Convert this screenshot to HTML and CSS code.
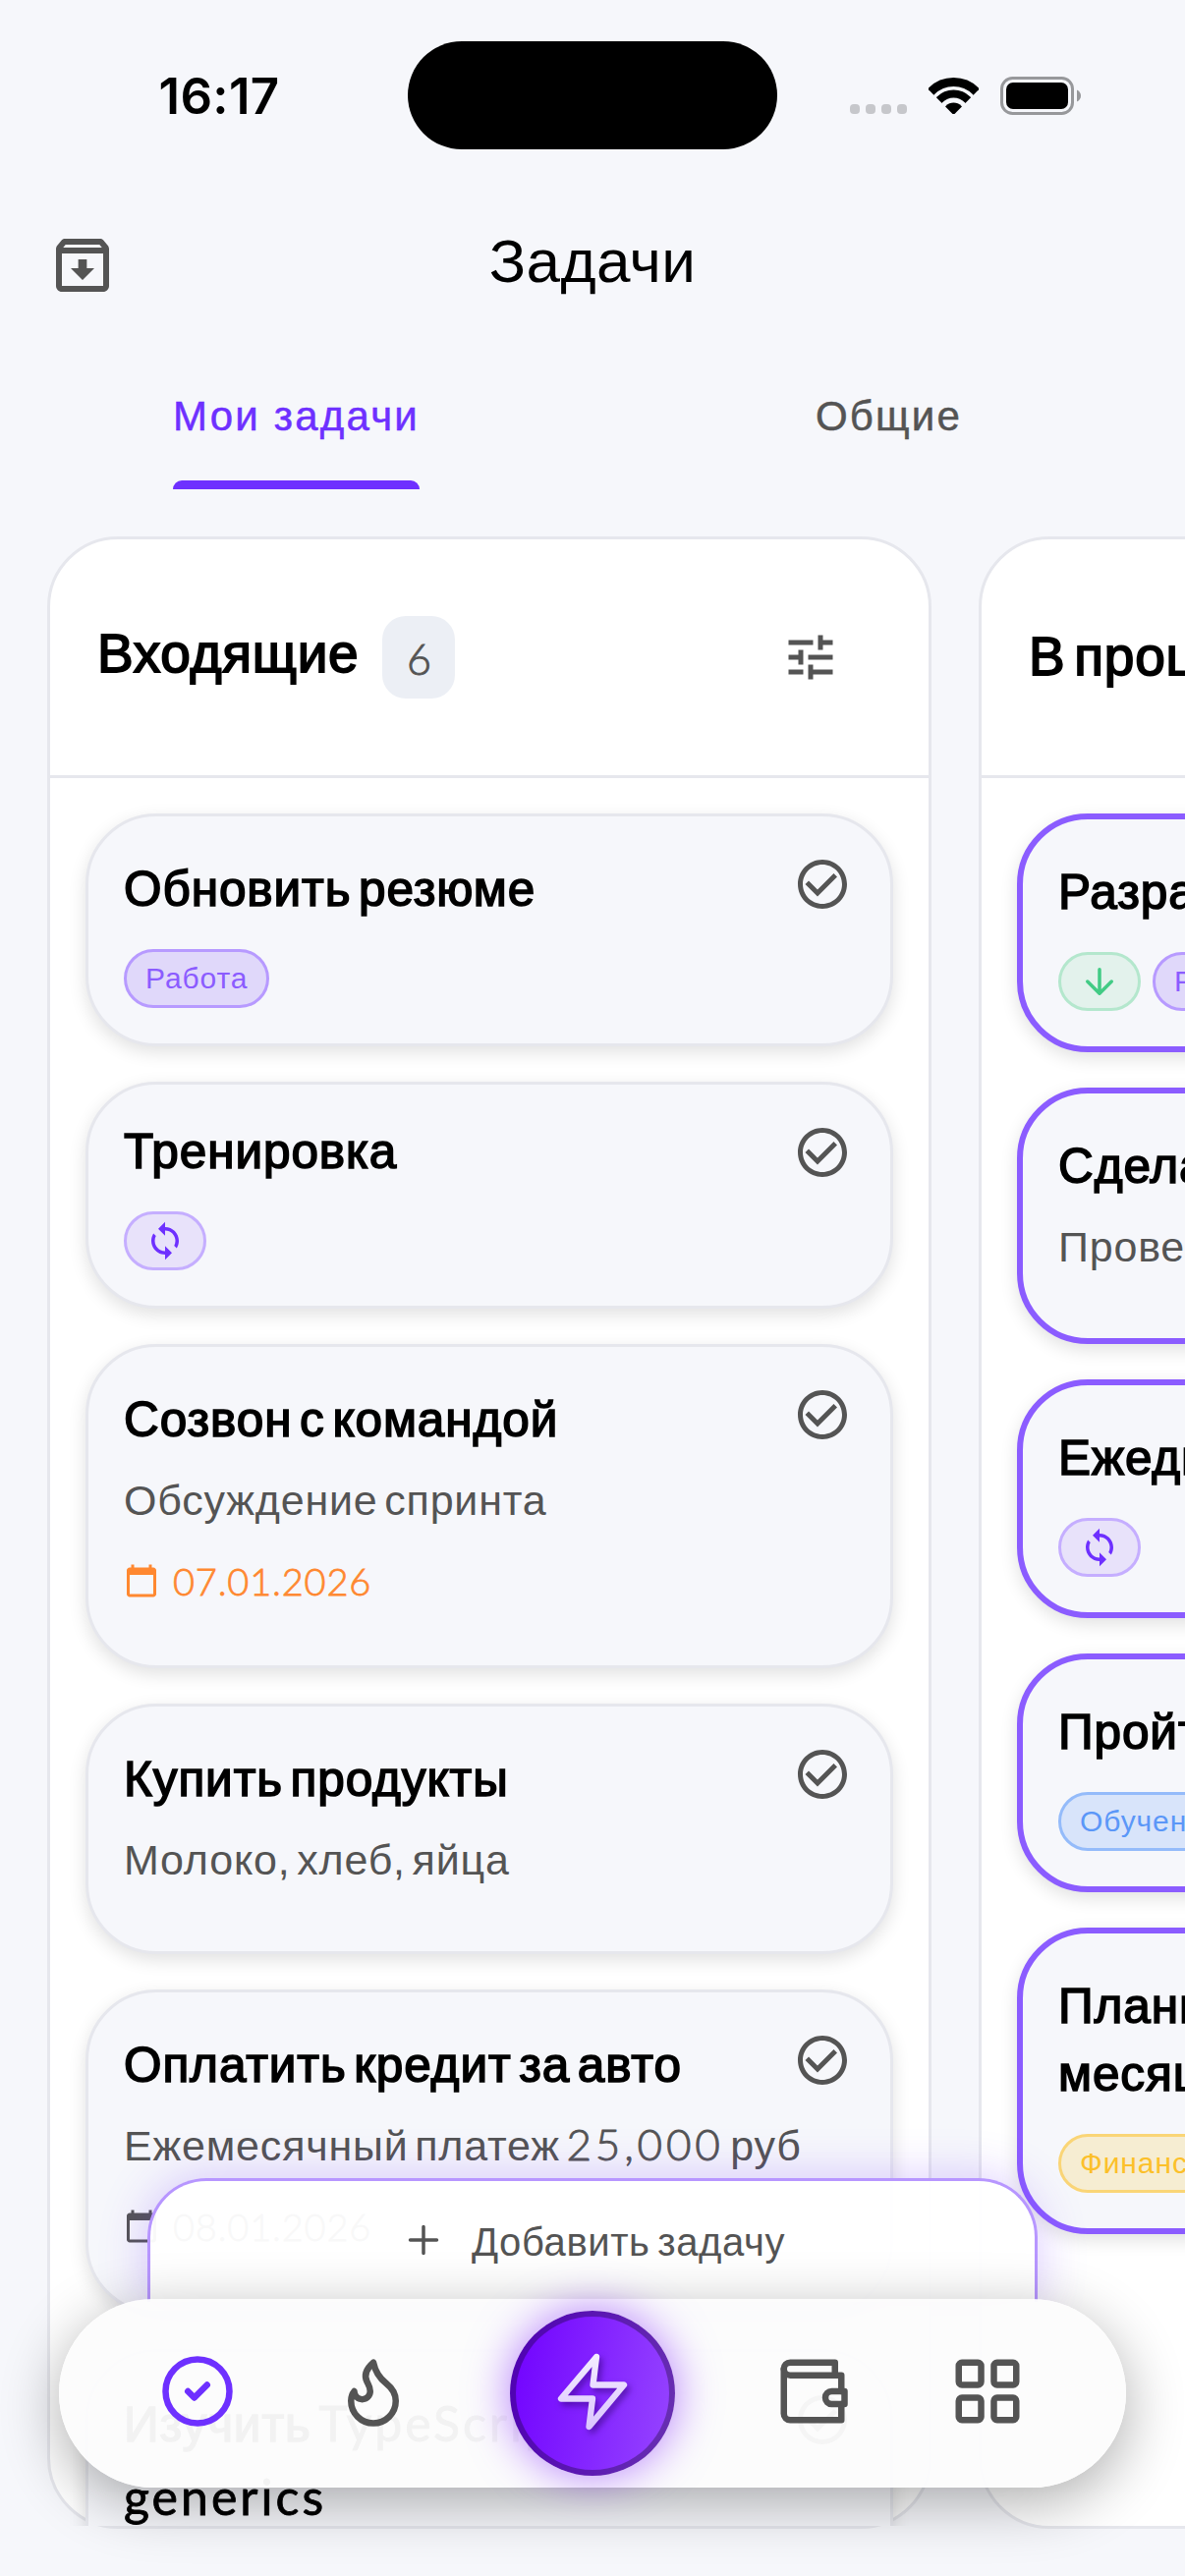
FILE: index.html
```html
<!DOCTYPE html>
<html lang="ru">
<head>
    <meta charset="UTF-8" />
    <meta name="viewport" content="width=device-width, initial-scale=1" />
    <title>Задачи</title>
    <link rel="stylesheet" href="styles.css">
</head>
<body>
    <!-- shared icons -->
    <svg class="sprite" aria-hidden="true">
        <symbol id="i-check" viewBox="0 0 24 24"><path fill="currentColor" d="M16.59 7.58 10 14.17l-3.59-3.58L5 12l5 5 8-8zM12 2C6.48 2 2 6.48 2 12s4.48 10 10 10 10-4.48 10-10S17.52 2 12 2zm0 18c-4.42 0-8-3.58-8-8s3.58-8 8-8 8 3.58 8 8-3.58 8-8 8z"/></symbol>
        <symbol id="i-sync" viewBox="0 0 24 24"><path fill="currentColor" d="M12 4V1L8 5l4 4V6c3.31 0 6 2.69 6 6 0 1.01-.25 1.97-.7 2.8l1.46 1.46C19.54 15.03 20 13.57 20 12c0-4.42-3.58-8-8-8zm0 14c-3.31 0-6-2.69-6-6 0-1.01.25-1.97.7-2.8L5.24 7.74C4.46 8.97 4 10.43 4 12c0 4.42 3.58 8 8 8v3l4-4-4-4v3z"/></symbol>
        <symbol id="i-calendar" viewBox="0 0 24 24"><path fill="currentColor" d="M20 3h-1V1h-2v2H7V1H5v2H4c-1.1 0-2 .9-2 2v16c0 1.1.9 2 2 2h16c1.1 0 2-.9 2-2V5c0-1.1-.9-2-2-2zm0 18H4V8h16v13z"/></symbol>
    </svg>

    <div class="phone">
        <div class="status">
            <div class="status-time">16:17</div>
            <div class="island"></div>
            <div class="status-icons">
                <div class="dots"><i></i><i></i><i></i><i></i></div>
                <svg class="wifi" viewBox="0 0 51 37">
                    <clipPath id="wedge"><path d="M25.5 38 -12 0V-9H63V0z"/></clipPath>
                    <g clip-path="url(#wedge)">
                        <circle cx="25.5" cy="36.5" r="32" fill="none" stroke="#000" stroke-width="9"/>
                        <circle cx="25.5" cy="36.5" r="20" fill="none" stroke="#000" stroke-width="8"/>
                        <circle cx="25.5" cy="36.5" r="11"/>
                    </g>
                </svg>
                <svg class="battery" viewBox="0 0 82 39">
                    <rect x="1.5" y="1.5" width="72" height="36" rx="11" fill="none" stroke="#97989b" stroke-width="3"/>
                    <rect x="6" y="6" width="63" height="27" rx="7"/>
                    <path fill="#97989b" d="M78 13.5c2.5 1 4 3.400 4 6s-1.500 5-4 6z"/>
                </svg>
            </div>
        </div>

        <header class="header">
            <svg class="archive" viewBox="0 0 24 24"><path fill="currentColor" d="m20.540 5.230-1.390-1.680C18.880 3.210 18.470 3 18 3H6c-.47 0-.88.21-1.160.55L3.460 5.230C3.170 5.570 3 6.020 3 6.500V19c0 1.100.9 2 2 2h14c1.100 0 2-.9 2-2V6.500c0-.48-.17-.93-.46-1.270zM6.240 5h11.520l.83 1H5.420l.82-1zM5 19V8h14v11H5zm8.450-9h-2.900v3H8l4 4 4-4h-2.550z"/></svg>
            <h1>Задачи</h1>
        </header>

        <nav class="tabs">
            <a class="tab active">Мои задачи</a>
            <a class="tab">Общие</a>
        </nav>

        <main class="board">
            <section class="column">
                <div class="column-head">
                    <h2>Входящие</h2>
                    <span class="count">6</span>
                    <svg class="tune" viewBox="0 0 24 24"><path fill="currentColor" d="M3 17v2h6v-2H3zM3 5v2h10V5H3zm10 16v-2h8v-2h-8v-2h-2v6h2zM7 9v2H3v2h4v2h2V9H7zm14 4v-2H11v2h10zm-6-4h2V7h4V5h-4V3h-2v6z"/></svg>
                </div>
                <div class="list">
                    <article class="card">
                        <div class="card-body">
                            <h3>Обновить резюме</h3>
                            <div class="chips"><span class="chip work">Работа</span></div>
                        </div>
                        <svg class="done"><use href="#i-check"/></svg>
                    </article>

                    <article class="card">
                        <div class="card-body">
                            <h3 class="tight">Тренировка</h3>
                            <div class="chips"><span class="chip repeat"><svg><use href="#i-sync"/></svg></span></div>
                        </div>
                        <svg class="done"><use href="#i-check"/></svg>
                    </article>

                    <article class="card">
                        <div class="card-body">
                            <h3>Созвон с командой</h3>
                            <p class="desc">Обсуждение спринта</p>
                            <div class="date today"><svg><use href="#i-calendar"/></svg>07.01.2026</div>
                        </div>
                        <svg class="done"><use href="#i-check"/></svg>
                    </article>

                    <article class="card">
                        <div class="card-body">
                            <h3>Купить продукты</h3>
                            <p class="desc">Молоко, хлеб, яйца</p>
                        </div>
                        <svg class="done"><use href="#i-check"/></svg>
                    </article>

                    <article class="card">
                        <div class="card-body">
                            <h3>Оплатить кредит за авто</h3>
                            <p class="desc">Ежемесячный платеж <span class="num">25,000</span> руб</p>
                            <div class="date"><svg><use href="#i-calendar"/></svg>08.01.2026</div>
                        </div>
                        <svg class="done"><use href="#i-check"/></svg>
                    </article>

                    <article class="card">
                        <div class="card-body">
                            <h3 class="loose">Изучить <span class="lat">TypeScript<br>generics</span></h3>
                        </div>
                        <svg class="done"><use href="#i-check"/></svg>
                    </article>
                </div>
            </section>

            <section class="column progress">
                <div class="column-head">
                    <h2>В процессе</h2>
                </div>
                <div class="list">
                    <article class="card">
                        <div class="card-body">
                            <h3>Разработать</h3>
                            <div class="chips">
                                <span class="chip low"><svg viewBox="0 0 24 24"><path fill="none" stroke="currentColor" stroke-width="2" stroke-linecap="round" stroke-linejoin="round" d="M12 5v14M5 12l7 7 7-7"/></svg></span>
                                <span class="chip work">Работа</span>
                            </div>
                        </div>
                    </article>

                    <article class="card">
                        <div class="card-body">
                            <h3>Сделать</h3>
                            <p class="desc">Проверить</p>
                        </div>
                    </article>

                    <article class="card">
                        <div class="card-body">
                            <h3>Ежедневно</h3>
                            <div class="chips"><span class="chip repeat"><svg><use href="#i-sync"/></svg></span></div>
                        </div>
                    </article>

                    <article class="card">
                        <div class="card-body">
                            <h3>Пройти курс</h3>
                            <div class="chips"><span class="chip study">Обучение</span></div>
                        </div>
                    </article>

                    <article class="card">
                        <div class="card-body">
                            <h3>Планирование<br>месяца</h3>
                            <div class="chips"><span class="chip money">Финансы</span></div>
                        </div>
                    </article>
                </div>
            </section>
        </main>

        <button class="add-task" type="button">
            <svg viewBox="0 0 32 32"><path fill="none" stroke="currentColor" stroke-width="3.500" stroke-linecap="round" d="M16 2.500v27M2.500 16h27"/></svg>
            Добавить задачу
        </button>

        <nav class="dock">
            <svg class="dock-icon active" viewBox="0 0 24 24"><circle cx="12" cy="12" r="10"/><path d="m9 12 2 2 4-4"/></svg>
            <svg class="dock-icon" viewBox="0 0 24 24"><path d="M8.500 14.500A2.500 2.500 0 0 0 11 12c0-1.380-.5-2-1-3-1.072-2.143-.224-4.054 2-6 .5 2.500 2 4.900 4 6.500 2 1.600 3 3.500 3 5.500a7 7 0 1 1-14 0c0-1.153.433-2.294 1-3a2.500 2.500 0 0 0 2.500 2.500z"/></svg>
            <div class="bolt">
                <svg viewBox="0 0 84 84">
                    <linearGradient id="boltFill" x1="0" y1="0" x2="0" y2="1">
                        <stop offset="0" stop-color="#f3ecff"/>
                        <stop offset="1" stop-color="#dcc6ff"/>
                    </linearGradient>
                    <path fill="none" stroke="url(#boltFill)" stroke-width="6.300" stroke-linecap="round" stroke-linejoin="round" d="M46 5 10 47.500h32L38.500 76 74 33.500H42.500z"/>
                </svg>
            </div>
            <svg class="dock-icon" viewBox="0 0 24 24"><path d="M21 12V7H5a2 2 0 0 1 0-4h14v4"/><path d="M3 5v14a2 2 0 0 0 2 2h16v-5"/><path d="M18 12a2 2 0 0 0 0 4h4v-4Z"/></svg>
            <svg class="dock-icon" viewBox="0 0 24 24"><rect x="3" y="3" width="7" height="7" rx="1"/><rect x="14" y="3" width="7" height="7" rx="1"/><rect x="14" y="14" width="7" height="7" rx="1"/><rect x="3" y="14" width="7" height="7" rx="1"/></svg>
        </nav>
    </div>
</body>
</html>
```
FILE: styles.css
```css
* {
    box-sizing: border-box;
}

body {
    margin: 0;
    background: #f6f7fb;
    font-family: "Liberation Sans", Arial, sans-serif;
    color: #000;
}

h1, h2, h3, p {
    margin: 0;
    font-weight: normal;
}

svg {
    display: block;
    flex: none;
}

.sprite {
    position: absolute;
    width: 0;
    height: 0;
}

.phone {
    position: relative;
    width: 1206px;
    height: 2622px;
    overflow: hidden;
}

/* status bar */
.status {
    height: 194px;
    display: grid;
    grid-template-columns: 415px 376px 415px;
    align-items: center;
}

.status-time {
    padding-left: 31px;
    text-align: center;
    font: 600 51px Inter, sans-serif;
    letter-spacing: 0.3px;
}

.island {
    height: 110px;
    border-radius: 55px;
    background: #000;
}

.status-icons {
    display: flex;
    align-items: flex-end;
    padding-left: 74px;
    gap: 22px;
}

.dots {
    display: flex;
    gap: 6px;
    padding-bottom: 1px;
}

.dots i {
    width: 10px;
    height: 10px;
    border-radius: 4px;
    background: #c6c7cb;
}

.wifi {
    width: 51px;
    height: 37px;
    margin-bottom: 1px;
}

.battery {
    width: 82px;
    height: 39px;
}

/* header */
.header {
    height: 144px;
    display: grid;
    grid-template-columns: 150px 1fr 150px;
    align-items: center;
}

.archive {
    width: 72px;
    height: 72px;
    margin: 8px 0 0 48px;
    color: #545454;
}

.header h1 {
    margin-top: -2px;
    text-align: center;
    font-size: 62px;
    letter-spacing: 0.4px;
}

.tabs {
    height: 160px;
    display: grid;
    grid-template-columns: 1fr 1fr;
    justify-items: center;
}

.tab {
    padding-top: 62px;
    font-size: 42px;
    line-height: 48px;
    letter-spacing: 2.2px;
    color: #545454;
    -webkit-text-stroke: 0.5px;
}

.tab.active {
    color: #6e30ff;
}

.tab.active::after {
    content: "";
    display: block;
    height: 9px;
    margin-top: 41px;
    border-radius: 9px 9px 0 0;
    background: #6e30ff;
}

/* board */
.board {
    display: flex;
    gap: 48px;
    margin-top: 48px;
    padding: 0 48px;
}

.column {
    flex: none;
    width: 900px;
    height: 2028px;
    display: flex;
    flex-direction: column;
    background: #fff;
    border: 3px solid #e6e7ed;
    border-radius: 72px;
}

.column-head {
    flex: none;
    height: 243px;
    display: flex;
    align-items: center;
    padding: 0 90px 0 48px;
    border-bottom: 3px solid #e6e7ed;
}

.column-head h2 {
    margin-top: -8px;
    font-size: 55px;
    letter-spacing: 0.7px;
    word-spacing: -7px;
    -webkit-text-stroke: 1.8px;
    white-space: nowrap;
}

.progress .column-head h2 {
    margin-top: -2px;
}

.count {
    width: 74px;
    height: 84px;
    margin-left: 24px;
    border-radius: 24px;
    background: #eceff5;
    color: #545454;
    font: 300 43px/88px Lato, sans-serif;
    text-align: center;
    -webkit-text-stroke: 0.9px;
}

.tune {
    width: 60px;
    height: 60px;
    margin-left: auto;
    color: #545454;
}

.list {
    flex: 1;
    min-height: 0;
    overflow: hidden;
    display: flex;
    flex-direction: column;
    gap: 36px;
    padding: 36px;
}

.card {
    flex: none;
    display: flex;
    padding: 36px;
    background: #f6f7fb;
    border: 3px solid #e6e7ed;
    border-radius: 72px;
    box-shadow: 0 6px 18px rgba(0, 0, 0, 0.12);
}

.card-body {
    flex: 1;
    min-width: 0;
}

.progress .card {
    border: 6px solid #8b5cff;
}

.card h3 {
    padding: 3px 0;
    font-size: 49.5px;
    line-height: 69px;
    letter-spacing: 0.9px;
    word-spacing: -7px;
    -webkit-text-stroke: 1.6px;
    white-space: nowrap;
}

.card h3.tight {
    padding: 0 0 5px;
    line-height: 64px;
}

.card h3.loose {
    padding: 0 0 60px;
    line-height: 75px;
}

.lat, .num {
    font-family: Lato, sans-serif;
    line-height: 0;
}

.lat {
    font-size: 50px;
    letter-spacing: 3px;
    -webkit-text-stroke: 0.8px;
}

.num {
    font-size: 44px;
    font-weight: 300;
    letter-spacing: 3.8px;
    -webkit-text-stroke: 0.9px;
}

.done {
    width: 60px;
    height: 60px;
    margin: 3px 3px 0 0;
    color: #545454;
}

.desc {
    margin-top: 15px;
    margin-bottom: 27px;
    font-size: 43px;
    line-height: 60px;
    letter-spacing: 0.8px;
    word-spacing: -6px;
    color: #545454;
    white-space: nowrap;
}

.date {
    display: flex;
    align-items: center;
    gap: 14px;
    height: 54px;
    margin-top: -2px;
    margin-bottom: 23px;
    font: 300 38px/50px Lato, sans-serif;
    letter-spacing: 0.8px;
    color: #545454;
    -webkit-text-stroke: 0.8px;
}

.date.today {
    color: #ff8830;
}

.date svg {
    width: 36px;
    height: 36px;
}

.chips {
    display: flex;
    gap: 12px;
    margin-top: 24px;
}

.chip {
    height: 60px;
    display: flex;
    align-items: center;
    justify-content: center;
    padding: 0 19px 1px;
    border: 3px solid;
    border-radius: 30px;
    font-size: 30px;
    letter-spacing: 0.9px;
}

.chip svg {
    width: 42px;
    height: 42px;
    margin: 1px -1px 0;
}

.chip.work {
    color: #8b5cff;
    background: #e0d8fa;
    border-color: #b79aff;
}

.chip.repeat {
    color: #6e30ff;
    background: #e8e2fa;
    border-color: #c5aeff;
}

.chip.low {
    color: #42cb85;
    background: #e3f2ec;
    border-color: #b4e7cd;
}

.chip.study {
    color: #5b97f8;
    background: #d8e4fa;
    border-color: #94bbfa;
}

.chip.money {
    color: #fcc02a;
    background: #f6edd2;
    border-color: #fad576;
}

/* floating controls over the board */
.add-task {
    position: absolute;
    left: 150px;
    top: 2217px;
    width: 906px;
    height: 126px;
    display: flex;
    justify-content: center;
    gap: 33px;
    padding: 45px 0 0 8px;
    border: 3px solid #b796ff;
    border-bottom: 0;
    border-radius: 60px 60px 0 0;
    background: rgba(255, 255, 255, 0.96);
    box-shadow: 0 0 48px rgba(110, 48, 255, 0.25);
    color: #545454;
    font: 40px/34px "Liberation Sans", Arial, sans-serif;
    letter-spacing: 0.6px;
    word-spacing: -4px;
}

.add-task svg {
    width: 32px;
    height: 32px;
    margin-top: -1px;
}

.dock {
    position: absolute;
    left: 60px;
    top: 2340px;
    width: 1086px;
    height: 192px;
    display: flex;
    align-items: center;
    justify-content: center;
    gap: 100.5px;
    border-radius: 96px;
    background: rgba(252, 252, 252, 0.96);
    box-shadow: 0 15px 60px rgba(0, 0, 0, 0.32);
}

.dock-icon {
    width: 78px;
    height: 78px;
    margin-top: -4px;
    fill: none;
    stroke: #545454;
    stroke-width: 2;
    stroke-linecap: round;
    stroke-linejoin: round;
}

.dock-icon.active {
    stroke: #6e30ff;
}

.bolt {
    width: 168px;
    height: 168px;
    display: flex;
    align-items: center;
    justify-content: center;
    border: 6px solid rgba(0, 0, 0, 0.3);
    border-radius: 50%;
    background: linear-gradient(100deg, #7000ff, #9747ff) border-box;
    box-shadow: 0 0 45px rgba(112, 0, 255, 0.5);
}

.bolt svg {
    width: 84px;
    height: 84px;
    filter: drop-shadow(3px 4px 3px rgba(40, 0, 100, 0.5));
}
```
